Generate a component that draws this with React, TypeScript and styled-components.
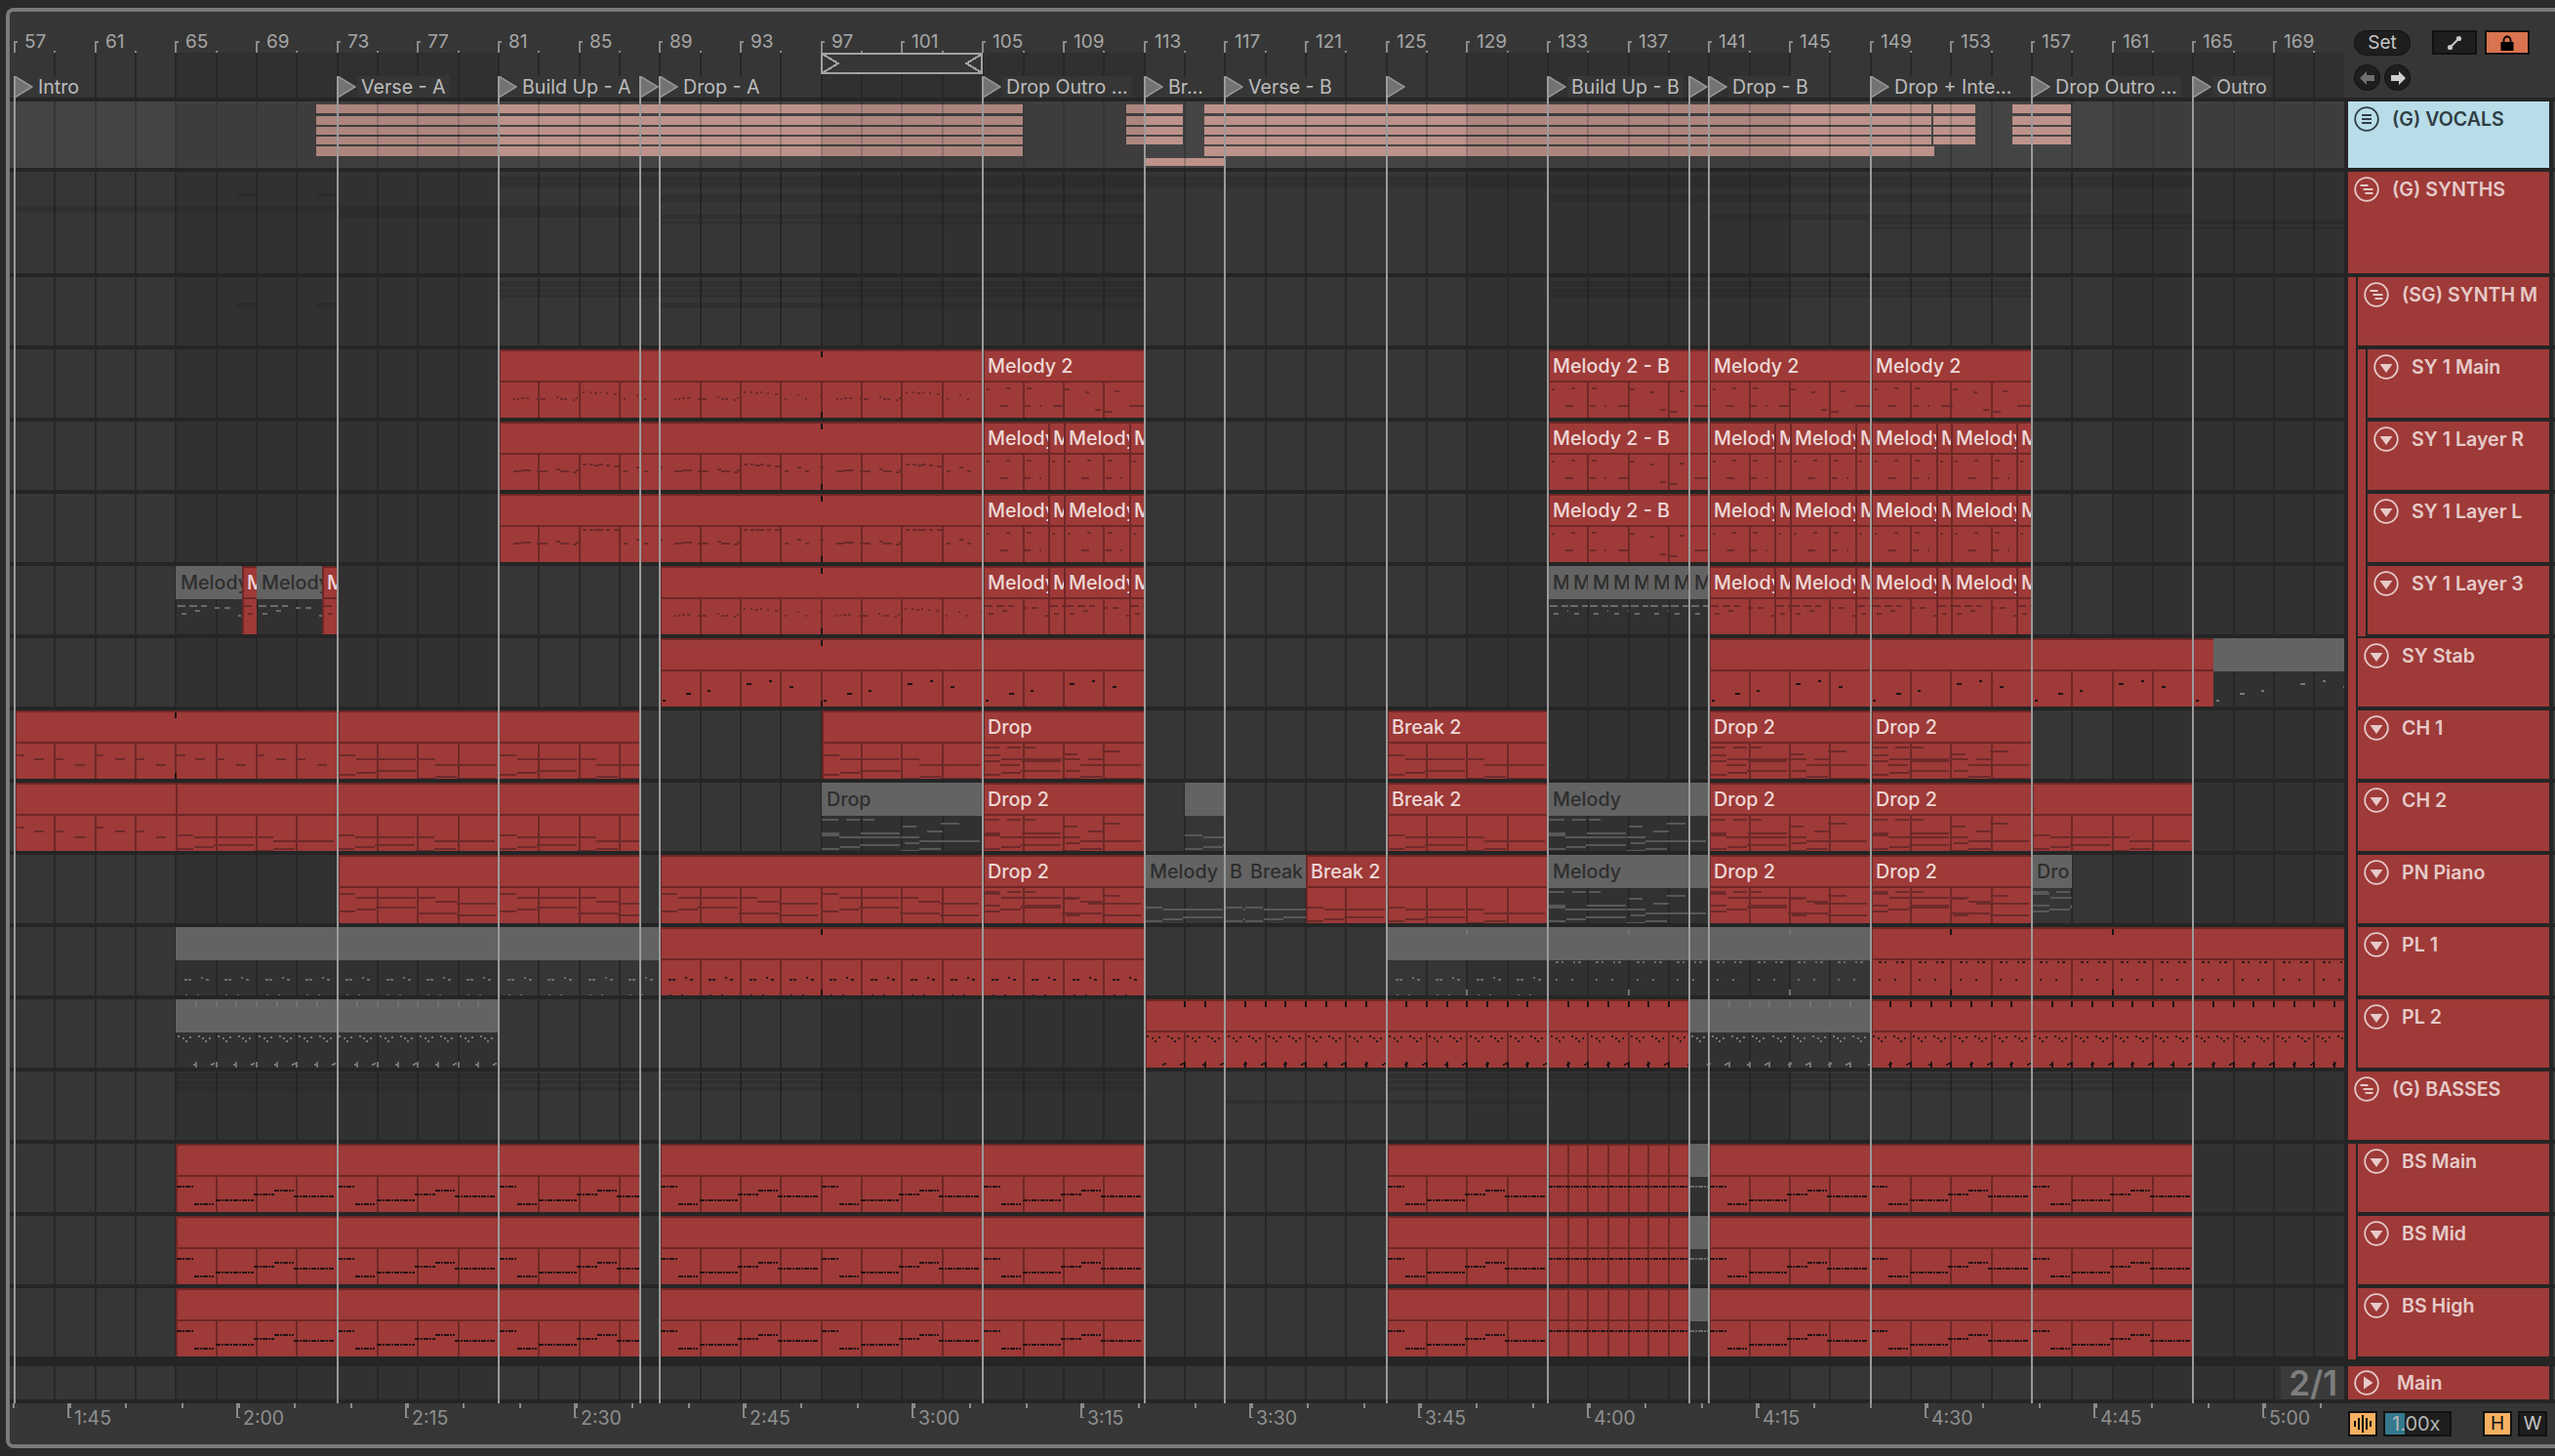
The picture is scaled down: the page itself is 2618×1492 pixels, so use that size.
import React from 'react';
import styled, { createGlobalStyle } from 'styled-components';

const GlobalStyle = createGlobalStyle`
  html, body {
    margin: 0;
    background: #2a2a2a;
    font-family: "Inter", "Liberation Sans", sans-serif;
  }
`

const LANE_W = 2392;
const RED_LINE = '#6e2826';

// screen position of a bar, in lane coordinates
const barX = (bar: number) => Math.round(15 + (bar - 57) * 20.67) - 10;
const range = (from: number, to: number, step: number) => {
  const out: number[] = [];
  for (let v = from; v <= to; v += step) out.push(v);
  return out;
};
const zones = [[65, 81], [97, 113], [129, 145], [161, 172.6]];

const Page = styled.div`
  width: 2618px;
  height: 1492px;
  padding: 8px 0 0 6px;
  box-sizing: border-box;
  overflow: hidden;
  background: #2a2a2a;
`
const Frame = styled.div`
  position: relative;
  width: 2612px;
  height: 1476px;
  box-sizing: border-box;
  border: 4px solid #7a7a7a;
  border-right: none;
  border-radius: 8px 0 0 8px;
  background: #363636;
  overflow: hidden;
`
const TopBar = styled.div`
  display: flex;
  height: 88px;
`
const Ruler = styled.div`
  position: relative;
  width: ${LANE_W}px;
  flex: none;
`
const Layer = styled.svg`
  position: absolute;
  left: 0;
  top: 0;
  display: block;
`
const BarLabel = styled.span`
  position: absolute;
  top: 20px;
  font-size: 19px;
  line-height: 22px;
  color: #a6a6a6;
`
const LocatorBox = styled.div`
  position: absolute;
  top: 66px;
  height: 22px;
  display: flex;
`
const LocatorName = styled.span`
  margin-left: 1px;
  padding: 0 4px;
  font-size: 19.6px;
  line-height: 22px;
  white-space: nowrap;
  color: #bdbdbd;
  background: #363636;
`
const Controls = styled.div`
  display: flex;
  flex-direction: column;
  gap: 11px;
  padding: 19px 0 0 11px;
`
const ControlRow = styled.div`
  display: flex;
  align-items: center;
`
const SetButton = styled.div`
  width: 56px;
  height: 24px;
  margin-right: 23px;
  border-radius: 12px;
  background: #1e1e1e;
  box-shadow: 0 0 0 1px #141414;
  color: #c6c6c6;
  font-size: 19px;
  line-height: 24px;
  text-align: center;
`
const SquareButton = styled.div<{ $on?: boolean }>`
  width: 46px;
  height: 25px;
  margin-right: 8px;
  box-sizing: border-box;
  border: 2px solid #111;
  background: ${p => (p.$on ? '#d97350' : '#1e1e1e')};
  display: flex;
  align-items: center;
  justify-content: center;
`
const RoundButton = styled.div`
  width: 25px;
  height: 25px;
  margin-right: 6px;
  border-radius: 50%;
  background: #1e1e1e;
  box-shadow: 0 0 0 1px #141414;
  display: flex;
  align-items: center;
  justify-content: center;
`
const Tracks = styled.div`
  display: flex;
  flex-direction: column;
  gap: 4px;
  padding: 4px 0;
  background: #252525;
`
const TrackRow = styled.div<{ $h: number; $extra?: number }>`
  display: flex;
  height: ${p => p.$h}px;
  margin-top: ${p => p.$extra || 0}px;
`
const Lane = styled.div`
  position: relative;
  width: ${LANE_W}px;
  flex: none;
  margin-right: 4px;
  background: #363636;
  overflow: hidden;
`
const TimeSig = styled.span`
  position: absolute;
  right: 0;
  top: 0;
  height: 34px;
  padding: 0 7px 0 8px;
  background: #3a3a3a;
  color: #7d7d7d;
  font-size: 35px;
  font-weight: 600;
  line-height: 34px;
`
const HeadCell = styled.div`
  display: flex;
  width: 206px;
  flex: none;
`
const Strip = styled.div<{ $tail: number }>`
  width: 8px;
  margin-right: 2px;
  margin-bottom: -${p => p.$tail}px;
  flex: none;
  background: #9e3a38;
`
const Head = styled.div<{ $blue?: boolean }>`
  flex: 1;
  display: flex;
  align-items: flex-start;
  gap: 13px;
  padding: 5px 0 0 6px;
  background: ${p => (p.$blue ? '#b8dde9' : '#9e3a38')};
  color: ${p => (p.$blue ? '#2f3e45' : '#e6cac8')};
`
const MainHead = styled(Head)`
  gap: 18px;
  padding-top: 4px;
`
const HeadName = styled.span`
  font-size: 19.6px;
  font-weight: 600;
  line-height: 26px;
  white-space: nowrap;
`
const Edge = styled.div`
  width: 2px;
  margin-left: 4px;
  flex: none;
  background: #3c3c3c;
`
const ClipBox = styled.div<{ $gray?: boolean }>`
  position: absolute;
  top: 0;
  bottom: 0;
  overflow: hidden;
  background: ${p => (p.$gray ? 'transparent' : '#9e3a38')};
  box-shadow: ${p => (p.$gray ? 'none' : `inset 2px 0 0 ${RED_LINE}`)};
`
const ClipHead = styled.div<{ $gray?: boolean }>`
  position: relative;
  height: 34px;
  box-sizing: border-box;
  padding-left: 5px;
  overflow: hidden;
  white-space: nowrap;
  font-size: 19.7px;
  font-weight: 500;
  line-height: 30px;
  ${p =>
    p.$gray
      ? 'background: #636363; color: #2e2e2e; line-height: 34px;'
      : `border-top: 2px solid ${RED_LINE}; border-bottom: 2px solid ${RED_LINE}; color: #eed8d6;`}
`
const LocatorLine = styled.div`
  position: absolute;
  top: 66px;
  height: 1360px;
  width: 2px;
  background: #9a9a9a;
`
const BottomBar = styled.div`
  display: flex;
  height: 42px;
`
const TimeLabel = styled.span`
  position: absolute;
  top: 4px;
  font-size: 19.5px;
  line-height: 22px;
  color: #8f8f8f;
`
const BottomControls = styled.div`
  display: flex;
  align-items: center;
  padding-left: 4px;
`
const KeyButton = styled.div<{ $on?: boolean; $gap?: number }>`
  width: 30px;
  height: 26px;
  margin-right: ${p => p.$gap || 0}px;
  box-sizing: border-box;
  border: 2px solid #111;
  background: ${p => (p.$on ? '#f5b061' : '#1e1e1e')};
  color: ${p => (p.$on ? '#111' : '#c4c4c4')};
  font-size: 19px;
  line-height: 22px;
  text-align: center;
  display: flex;
  align-items: center;
  justify-content: center;
`
const TempoBox = styled.div`
  position: relative;
  width: 70px;
  height: 26px;
  margin-right: 32px;
  box-sizing: border-box;
  border: 2px solid #111;
  background: #1e1e1e;
  color: #b6b6b6;
  font-size: 20px;
  line-height: 22px;
  padding-left: 7px;
`
const TempoFill = styled.div`
  position: absolute;
  left: 0;
  top: 0;
  bottom: 0;
  width: 20px;
  background: #33788e;
`
const TempoText = styled.span`
  position: relative;
`

type Note = [number, number, number];
type Pattern = { notes: Note[]; period: number; dash?: string; ink?: string; grayInk?: string; thick?: number };

const melA: Note[] = [[15, 2, 16], [19, 2, 16], [23, 3, 15], [28, 3, 15], [39, 3, 16], [43, 5, 16], [59, 2, 14], [63, 3, 16], [67, 3, 16], [76, 2, 17], [79, 2, 15], [86, 2, 9], [93, 2, 9], [98, 3, 10], [103, 2, 9], [110, 2, 10], [118, 3, 11], [128, 2, 16], [141, 2, 12], [149, 2, 16], [164, 2, 12]];
const melody: Pattern = { notes: melA, period: 165.4, ink: '#6e2a2a' };
const melodyWide: Pattern = { notes: melA.map(([x, w, y]) => [x, w + 2, y] as Note), period: 165.4, ink: '#6e2a2a' };
const melodyTop: Pattern = { notes: melA.map(([x, w, y]) => [x, w + 2, y < 12 ? 2 : y] as Note), period: 165.4, ink: '#6e2a2a' };
const melB: Pattern = {
  notes: [[4, 3, 6], [24, 4, 5], [45, 5, 5], [18, 8, 23], [43, 6, 23], [58, 2, 23], [72, 12, 23], [84, 5, 6], [105, 4, 9], [115, 6, 27], [125, 8, 29], [150, 15, 23], [135, 5, 8]],
  period: 165.4,
  ink: '#6e2a2a',
};
const melC: Pattern = { notes: [[2, 8, 6], [14, 8, 6], [26, 6, 6], [6, 5, 14], [20, 5, 11], [40, 5, 8], [50, 6, 8], [64, 3, 16]], period: 82.7, ink: '#6e2a2a', grayInk: '#6a6a6a' };
const stab: Pattern = { notes: [[3, 3, 29], [27, 5, 22], [49, 3, 19], [89, 5, 12], [112, 3, 9], [133, 4, 15]], period: 165.4, ink: '#201414', grayInk: '#777' };

const ch8: Note[] = [[0, 18, 11], [0, 18, 31], [19, 61, 15], [19, 20, 29], [39, 41, 27], [81, 19, 15], [81, 19, 35], [100, 22, 21], [100, 22, 33], [122, 40, 21], [122, 40, 35]];
const ch9: Note[] = [[0, 18, 19], [0, 18, 33], [19, 61, 21], [19, 20, 31], [39, 41, 29], [81, 19, 21], [81, 19, 35], [100, 22, 25], [100, 22, 33], [122, 40, 25]];
const ch10: Note[] = [[0, 18, 5], [0, 18, 23], [19, 61, 9], [19, 20, 21], [39, 41, 19], [81, 19, 9], [81, 19, 25], [100, 22, 13], [100, 22, 25], [122, 40, 15], [122, 40, 27]];
const extra: Note[] = [[0, 17, 3], [25, 14, 3], [42, 12, 3], [0, 18, 17], [18, 20, 21], [40, 40, 17], [83, 14, 10], [108, 16, 15], [122, 19, 7], [85, 15, 27]];
const chPat = (notes: Note[]): Pattern => ({ notes, period: 165.4, ink: '#6e2a2a', grayInk: '#585858' });
const sparse: Pattern = { notes: [[0, 10, 11], [20, 10, 15], [41, 9, 15], [62, 10, 21], [82, 9, 11], [103, 10, 15], [124, 9, 15], [145, 10, 21]], period: 165.4, ink: '#6e2a2a' };

const plEarly: Pattern = { notes: [[9, 3, 19], [13, 3, 19], [26, 2, 17], [31, 3, 19], [10, 2, 35], [22, 2, 35]], period: 41.35, ink: '#2a1a1a', grayInk: '#6e6e6e' };
const plLate: Pattern = { notes: [[8, 3, 1], [14, 2, 1], [26, 2, 1], [31, 3, 1], [8, 2, 19], [24, 2, 19]], period: 41.35, ink: '#2a1a1a', grayInk: '#6e6e6e' };
const pl2: Pattern = {
  notes: [[2, 2, 3], [7, 2, 5], [10, 2, 8], [14, 2, 4], [23, 2, 3], [27, 2, 5], [30, 2, 8], [34, 2, 5], [18, 2, 32], [20, 2, 31], [36, 2, 32], [38, 2, 31]],
  period: 41.35,
  ink: '#2a1a1a',
  grayInk: '#7a7a7a',
};
const bass: Pattern = { notes: [[1, 18, 9], [19, 20, 27], [41, 39, 23], [80, 21, 17], [101, 20, 13], [121, 41, 19]], period: 165.4, dash: '5 1 2 1', ink: '#241414', thick: 2 };
const bassRun: Pattern = { notes: [[0, 145, 9]], period: 165.4, dash: '5 1 2 1', ink: '#241414', thick: 2 };

type ClipData = { from: number; to: number; name?: string; gray?: boolean; notes?: Pattern; step?: number; marks?: number[] };
const clip = (from: number, to: number, name: string, notes?: Pattern, gray?: boolean, extras?: Partial<ClipData>): ClipData => ({ from, to, name, notes, gray, ...extras });

const melodiesFrom = (b: number, pat: Pattern) => [
  clip(b, b + 3.25, 'Melody', pat), clip(b + 3.25, b + 4, 'M', pat), clip(b + 4, b + 7.25, 'Melody', pat), clip(b + 7.25, b + 8, 'M', pat),
];
const bassClips = [
  clip(65, 88, '', bass),
  clip(89, 113, '', bass),
  clip(125, 133, '', bass),
  clip(133, 140, '', bassRun, false, { step: 1 }),
  clip(140, 141, '', bassRun, true),
  clip(141, 165, '', bass),
];

type TrackData = {
  name: string;
  h: number;
  level: number;
  icon: 'groupClosed' | 'groupOpen' | 'down';
  blue?: boolean;
  clips?: ClipData[];
  bands?: number[][];
  tail?: number;
};

const tracks: TrackData[] = [
  { name: '(G) VOCALS', h: 68, level: 0, icon: 'groupClosed', blue: true },
  {
    name: '(G) SYNTHS', h: 104, level: 0, icon: 'groupOpen',
    bands: [[81, 165, 4, 5], [81, 165, 10, 6], [89, 113, 23, 8], [89, 113, 44, 4], [89, 113, 50, 4], [57, 88, 35, 7], [73, 88, 42, 5], [68, 69, 22, 4], [72, 73, 22, 4], [149, 172.5, 50, 4], [149, 172.5, 56, 3], [133, 157, 23, 8], [141, 165, 44, 5]],
  },
  {
    name: '(SG) SYNTH M', h: 70, level: 1, icon: 'groupOpen',
    bands: [[81, 113, 4, 6], [81, 113, 12, 4], [81, 113, 17, 4], [89, 113, 26, 6], [133, 157, 4, 6], [133, 157, 12, 4], [133, 157, 17, 4], [68, 69, 26, 6], [72, 73, 26, 6]],
  },
  {
    name: 'SY 1 Main', h: 70, level: 2, icon: 'down',
    clips: [
      clip(81, 105, '', melody, false, { marks: [97] }), clip(105, 113, 'Melody 2', melB),
      clip(133, 141, 'Melody 2 - B', melB), clip(141, 149, 'Melody 2', melB), clip(149, 157, 'Melody 2', melB),
    ],
  },
  {
    name: 'SY 1 Layer R', h: 70, level: 2, icon: 'down',
    clips: [clip(81, 105, '', melodyWide, false, { marks: [97] }), ...melodiesFrom(105, melB), clip(133, 141, 'Melody 2 - B', melB), ...melodiesFrom(141, melB), ...melodiesFrom(149, melB)],
  },
  {
    name: 'SY 1 Layer L', h: 70, level: 2, icon: 'down',
    clips: [clip(81, 105, '', melodyTop, false, { marks: [97] }), ...melodiesFrom(105, melB), clip(133, 141, 'Melody 2 - B', melB), ...melodiesFrom(141, melB), ...melodiesFrom(149, melB)],
  },
  {
    name: 'SY 1 Layer 3', h: 70, level: 2, icon: 'down', tail: 2,
    clips: [
      clip(65, 68.25, 'Melody', melC, true), clip(68.25, 69, 'M', melC), clip(69, 72.25, 'Melody', melC, true), clip(72.25, 73, 'M', melC),
      clip(89, 105, '', melody, false, { marks: [97] }), ...melodiesFrom(105, melC),
      ...range(133, 140, 1).map(b => clip(b, b + 1, 'M', melC, true)),
      ...melodiesFrom(141, melC), ...melodiesFrom(149, melC),
    ],
  },
  {
    name: 'SY Stab', h: 70, level: 1, icon: 'down',
    clips: [clip(89, 113, '', stab, false, { marks: [97] }), clip(141, 166, '', stab), clip(166, 172.5, '', stab, true)],
  },
  {
    name: 'CH 1', h: 70, level: 1, icon: 'down',
    clips: [
      clip(57, 73, '', sparse, false, { marks: [65] }), clip(73, 88, '', chPat(ch8)), clip(97, 105, '', chPat(ch8)), clip(105, 113, 'Drop', chPat([...ch8, ...extra])),
      clip(125, 133, 'Break 2', chPat(ch8)), clip(141, 149, 'Drop 2', chPat([...ch8, ...extra])), clip(149, 157, 'Drop 2', chPat([...ch8, ...extra])),
    ],
  },
  {
    name: 'CH 2', h: 70, level: 1, icon: 'down',
    clips: [
      clip(57, 65, '', sparse), clip(65, 88, '', chPat(ch9)), clip(97, 105, 'Drop', chPat([...ch9, ...extra]), true), clip(105, 113, 'Drop 2', chPat([...ch9, ...extra])), clip(115, 117, '', chPat(ch9), true),
      clip(125, 133, 'Break 2', chPat(ch9)), clip(133, 141, 'Melody', chPat([...ch9, ...extra]), true), clip(141, 149, 'Drop 2', chPat([...ch9, ...extra])),
      clip(149, 157, 'Drop 2', chPat([...ch9, ...extra])), clip(157, 165, '', chPat(ch9)),
    ],
  },
  {
    name: 'PN Piano', h: 70, level: 1, icon: 'down',
    clips: [
      clip(73, 88, '', chPat(ch10)), clip(89, 105, '', chPat(ch10)), clip(105, 113, 'Drop 2', chPat([...ch10, ...extra])),
      clip(113, 117, 'Melody', chPat(ch9), true), clip(117, 118, 'B', chPat(ch9), true), clip(118, 121, 'Break', chPat(ch9), true),
      clip(121, 125, 'Break 2', chPat(ch9)), clip(125, 133, '', chPat(ch9)), clip(133, 141, 'Melody', chPat([...ch9, ...extra]), true),
      clip(141, 149, 'Drop 2', chPat([...ch10, ...extra])), clip(149, 157, 'Drop 2', chPat([...ch10, ...extra])), clip(157, 159, 'Dro', chPat([...ch10, ...extra]), true),
    ],
  },
  {
    name: 'PL 1', h: 70, level: 1, icon: 'down',
    clips: [
      clip(65, 89, '', plEarly, true, { marks: [73, 81] }), clip(89, 113, '', plEarly, false, { marks: [97] }),
      clip(125, 133, '', plEarly, true, { marks: [129] }), clip(133, 149, '', plLate, true, { marks: [137, 145] }), clip(149, 172.5, '', plLate, false, { marks: [153, 161] }),
    ],
  },
  {
    name: 'PL 2', h: 70, level: 1, icon: 'down',
    clips: [
      clip(65, 81, '', pl2, true, { marks: range(66, 80, 1) }), clip(113, 140, '', pl2, false, { marks: range(115, 139, 1) }),
      clip(140, 149, '', pl2, true, { marks: range(141, 148, 1) }), clip(149, 172.5, '', pl2, false, { marks: range(150, 172, 1) }),
    ],
  },
  {
    name: '(G) BASSES', h: 70, level: 0, icon: 'groupOpen',
    bands: [[65, 88, 2, 5], [65, 88, 9, 4], [65, 88, 15, 5], [89, 113, 2, 5], [89, 113, 9, 4], [89, 113, 15, 5], [125, 165, 2, 5], [125, 165, 9, 4], [125, 165, 15, 5], [117, 133, 29, 4]],
  },
  { name: 'BS Main', h: 70, level: 1, icon: 'down', clips: bassClips, tail: 4 },
  { name: 'BS Mid', h: 70, level: 1, icon: 'down', clips: bassClips, tail: 4 },
  { name: 'BS High', h: 70, level: 1, icon: 'down', clips: bassClips, tail: 3 },
];

const locators: [number, string][] = [
  [57, 'Intro'], [73, 'Verse - A'], [81, 'Build Up - A'], [88, ''], [89, 'Drop - A'], [105, 'Drop Outro ...'], [113, 'Br...'], [117, 'Verse - B'],
  [125, ''], [133, 'Build Up - B'], [140, ''], [141, 'Drop - B'], [149, 'Drop + Inte...'], [157, 'Drop Outro ...'], [165, 'Outro'],
];
const times = ['1:45', '2:00', '2:15', '2:30', '2:45', '3:00', '3:15', '3:30', '3:45', '4:00', '4:15', '4:30', '4:45', '5:00'];
const timeX = (i: number) => 59 + i * 173;

function LaneGrid({ h, light }: { h: number; light?: boolean }) {
  const bars = range(59, 171, 2);
  return (
    <Layer width={LANE_W} height={h} shapeRendering="crispEdges">
      <rect x={0} y={0} width={LANE_W} height={h} fill={light ? '#444444' : '#363636'} />
      {zones.map(([a, b]) => (
        <rect key={a} x={barX(a)} y={0} width={barX(b) - barX(a)} height={h} fill={light ? '#3f3f3f' : '#313131'} />
      ))}
      {bars.map(b => (
        <rect key={b} x={barX(b) - 1} y={0} width={2} height={h} fill={light ? '#353535' : '#272727'} />
      ))}
    </Layer>
  );
}

function ClipArt({ data, width }: { data: ClipData; width: number }) {
  const left = barX(data.from);
  const step = data.step || 2;
  const notes = data.notes;
  const ink = notes ? (data.gray ? notes.grayInk || '#6c6c6c' : notes.ink || '#6e2a2a') : '';
  const repeats = notes ? range(0, Math.ceil(width / notes.period), 1) : [];
  const grid = data.gray ? [] : range(57, 173, step).filter(b => b > data.from && b < data.to);
  return (
    <Layer width={width} height={70} shapeRendering="crispEdges">
      {grid.map(b => (
        <rect key={b} x={barX(b) - left - 1} y={34} width={2} height={36} fill={RED_LINE} />
      ))}
      {step === 1 && grid.length > 0 && range(data.from + 1, data.to - 1, 1).map(b => (
        <rect key={'h' + b} x={barX(b) - left - 1} y={2} width={2} height={32} fill={RED_LINE} />
      ))}
      {notes && repeats.map(k =>
        notes.notes.map(([x, w, y], i) => (
          <line
            key={k + '-' + i}
            x1={Math.round(x + k * notes.period)}
            x2={Math.round(x + k * notes.period) + w}
            y1={35 + y}
            y2={35 + y}
            stroke={ink}
            strokeWidth={notes.thick || 2}
            strokeDasharray={notes.dash}
          />
        ))
      )}
      {(data.marks || []).map(b => (
        <g key={b} fill={data.gray ? '#737373' : '#1c1414'}>
          <rect x={barX(b) - left - 1} y={2} width={2} height={6} />
          <rect x={barX(b) - left - 1} y={64} width={2} height={6} />
        </g>
      ))}
    </Layer>
  );
}

function Clip({ data }: { data: ClipData }) {
  const left = barX(data.from);
  const width = barX(data.to) - left;
  return (
    <ClipBox $gray={data.gray} style={{ left, width }}>
      <ClipHead $gray={data.gray}>{data.name}</ClipHead>
      <ClipArt data={data} width={width} />
    </ClipBox>
  );
}

function VocalOverview() {
  const top = [[3, 9], [15, 9], [26, 8], [36, 8]];
  const x = (px: number) => px - 10;
  const blocks = [[324, 1048], [1154, 1212], [1234, 1979], [1981, 2024], [2062, 2122]];
  return (
    <Layer width={LANE_W} height={68} shapeRendering="crispEdges">
      {blocks.map(([a, b]) =>
        top.map(([y, h]) => <rect key={a + '-' + y} x={x(a)} y={y} width={b - a} height={h} fill="#bd928a" />)
      )}
      <rect x={x(324)} y={46} width={724} height={10} fill="#bd928a" />
      <rect x={x(1234)} y={46} width={748} height={10} fill="#bd928a" />
      <rect x={x(1173)} y={58} width={82} height={8} fill="#bd928a" />
      {zones.map(([a, b]) => (
        <rect key={a} x={barX(a)} y={3} width={barX(b) - barX(a)} height={63} fill="rgba(60,40,40,0.12)" />
      ))}
      {range(59, 171, 2).map(b => (
        <rect key={b} x={barX(b) - 1} y={3} width={2} height={63} fill="rgba(60,60,60,0.28)" />
      ))}
    </Layer>
  );
}

function FoldIcon({ kind }: { kind: 'groupClosed' | 'groupOpen' | 'down' | 'right' }) {
  return (
    <svg width="26" height="26" viewBox="0 0 26 26" style={{ flex: 'none' }} fill="currentColor">
      <circle cx="13" cy="13" r="11.8" fill="none" stroke="currentColor" strokeWidth="1.8" />
      {kind === 'groupClosed' && (
        <g>
          <rect x="8" y="8" width="10" height="2" />
          <rect x="8" y="12" width="10" height="2" />
          <rect x="8" y="16" width="10" height="2" />
        </g>
      )}
      {kind === 'groupOpen' && (
        <g>
          <rect x="6.5" y="8" width="8" height="2" />
          <rect x="9.5" y="12" width="10" height="2" />
          <rect x="11.5" y="16" width="8" height="2" />
        </g>
      )}
      {kind === 'down' && <polygon points="6.5,10 19.5,10 13,19" />}
      {kind === 'right' && <polygon points="10,6.5 19.5,13 10,19.5" />}
    </svg>
  );
}

function RulerArt() {
  return (
    <Layer width={LANE_W} height={88} shapeRendering="crispEdges">
      {zones.map(([a, b]) => (
        <rect key={a} x={barX(a)} y={42} width={barX(b) - barX(a)} height={46} fill="#303030" />
      ))}
      {range(59, 171, 2).map(b => (
        <rect key={b} x={barX(b) - 1} y={42} width={2} height={46} fill="#272727" />
      ))}
      {range(57, 169, 4).map(b => (
        <g key={b} fill="#8a8a8a">
          <rect x={barX(b) - 1} y={30} width={2} height={12} />
          <rect x={barX(b) - 1} y={30} width={4} height={2} />
        </g>
      ))}
      {range(59, 171, 4).map(b => (
        <rect key={b} x={barX(b) - 1} y={40} width={2} height={2} fill="#8a8a8a" />
      ))}
      <rect x={barX(97)} y={42} width={barX(105) - barX(97)} height={22} fill="#363636" />
      <g fill="none" stroke="#a2a2a2" strokeWidth="2">
        <rect x={barX(97)} y={43} width={barX(105) - barX(97) - 1} height={20} />
        <polyline points={`${barX(97)},43 ${barX(97) + 17},53 ${barX(97)},63`} />
        <polyline points={`${barX(105)},43 ${barX(105) - 17},53 ${barX(105)},63`} />
      </g>
    </Layer>
  );
}

function Flag() {
  return (
    <svg width="20" height="22" viewBox="0 0 20 22" style={{ flex: 'none' }}>
      <polygon points="1,0 19,11 1,22" fill="#737373" />
      <polyline points="1,0 19,11 1,22" fill="none" stroke="#969696" strokeWidth="1.5" />
    </svg>
  );
}

function TimeArt() {
  const subs = range(0, 41, 1).map(i => 3 + i * 57.67);
  return (
    <Layer width={LANE_W} height={42} shapeRendering="crispEdges">
      {subs.map(x => (
        <rect key={x} x={Math.round(x)} y={0} width={2} height={5} fill="#8a8a8a" />
      ))}
      {times.map((t, i) => (
        <g key={t} fill="#8a8a8a">
          <rect x={timeX(i)} y={0} width={2} height={15} />
          <rect x={timeX(i)} y={14} width={4} height={1} />
        </g>
      ))}
    </Layer>
  );
}

function App() {
  return (
    <Page>
      <GlobalStyle />
      <Frame>
        <TopBar>
          <Ruler>
            <RulerArt />
            {range(57, 169, 4).map(b => (
              <BarLabel key={b} style={{ left: barX(b) + 10 }}>{b}</BarLabel>
            ))}
            {locators.map(([b, name]) => (
              <LocatorBox key={b} style={{ left: barX(b) - 1 }}>
                <Flag />
                {name && <LocatorName>{name}</LocatorName>}
              </LocatorBox>
            ))}
          </Ruler>
          <Controls>
            <ControlRow>
              <SetButton>Set</SetButton>
              <SquareButton>
                <svg width="16" height="16" viewBox="0 0 16 16">
                  <line x1="4" y1="12" x2="12" y2="4" stroke="#c8c8c8" strokeWidth="2" />
                  <circle cx="3.5" cy="12.5" r="2.6" fill="#c8c8c8" />
                  <circle cx="12.5" cy="3.5" r="2.6" fill="#c8c8c8" />
                </svg>
              </SquareButton>
              <SquareButton $on>
                <svg width="16" height="16" viewBox="0 0 16 16">
                  <path d="M4.5 7V5a3.5 3.5 0 0 1 7 0v2" fill="none" stroke="#000" strokeWidth="1.8" />
                  <rect x="1.5" y="7" width="13" height="9" fill="#000" />
                </svg>
              </SquareButton>
            </ControlRow>
            <ControlRow>
              <RoundButton>
                <svg width="16" height="14" viewBox="0 0 16 14">
                  <polygon points="0,7 7,0 7,4 15,4 15,10 7,10 7,14" fill="#6f6f6f" />
                </svg>
              </RoundButton>
              <RoundButton>
                <svg width="16" height="14" viewBox="0 0 16 14">
                  <polygon points="16,7 9,0 9,4 1,4 1,10 9,10 9,14" fill="#cfcfcf" />
                </svg>
              </RoundButton>
            </ControlRow>
          </Controls>
        </TopBar>

        <Tracks>
          {tracks.map((t, i) => (
            <TrackRow key={t.name} $h={t.h}>
              <Lane>
                <LaneGrid h={t.h} light={i === 0} />
                {i === 0 && <VocalOverview />}
                {t.bands && (
                  <Layer width={LANE_W} height={t.h} shapeRendering="crispEdges">
                    {t.bands.map(([a, b, y, h], n) => (
                      <rect key={n} x={barX(a)} y={y} width={barX(b) - barX(a)} height={h} fill="rgba(0,0,0,0.1)" />
                    ))}
                  </Layer>
                )}
                {(t.clips || []).map((c, n) => (
                  <Clip key={n} data={c} />
                ))}
              </Lane>
              <HeadCell>
                {range(1, t.level, 1).map(n => (
                  <Strip key={n} $tail={n === t.level && t.tail !== undefined ? t.tail : 4} />
                ))}
                <Head $blue={t.blue}>
                  <FoldIcon kind={t.icon} />
                  <HeadName>{t.name}</HeadName>
                </Head>
              </HeadCell>
              <Edge />
            </TrackRow>
          ))}
          <TrackRow $h={34} $extra={6}>
            <Lane>
              <LaneGrid h={34} />
              <TimeSig>2/1</TimeSig>
            </Lane>
            <HeadCell>
              <MainHead>
                <FoldIcon kind="right" />
                <HeadName>Main</HeadName>
              </MainHead>
            </HeadCell>
            <Edge />
          </TrackRow>
        </Tracks>

        <BottomBar>
          <Ruler>
            <TimeArt />
            {times.map((t, i) => (
              <TimeLabel key={t} style={{ left: timeX(i) + 7 }}>{t}</TimeLabel>
            ))}
          </Ruler>
          <BottomControls>
            <KeyButton $on $gap={6}>
              <svg width="20" height="18" viewBox="0 0 20 18" fill="#111">
                <rect x="1" y="6" width="2" height="6" />
                <rect x="5" y="3" width="2" height="12" />
                <rect x="9" y="0" width="2" height="18" />
                <rect x="13" y="3" width="2" height="12" />
                <rect x="17" y="6" width="2" height="6" />
              </svg>
            </KeyButton>
            <TempoBox>
              <TempoFill />
              <TempoText>1.00x</TempoText>
            </TempoBox>
            <KeyButton $on $gap={6}>H</KeyButton>
            <KeyButton>W</KeyButton>
          </BottomControls>
        </BottomBar>

        {locators.map(([b]) => (
          <LocatorLine key={b} style={{ left: barX(b) - 1 }} />
        ))}
      </Frame>
    </Page>
  );
}

export default App;
